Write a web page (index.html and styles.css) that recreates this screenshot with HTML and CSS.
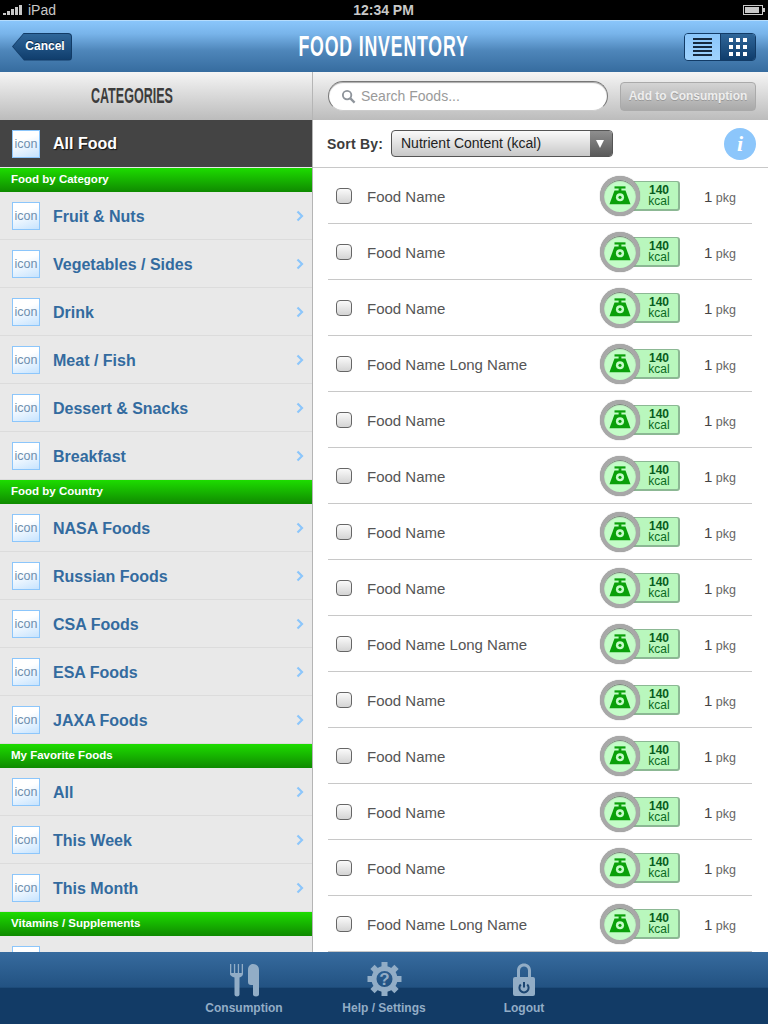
FILE: index.html
```html
<!DOCTYPE html>
<html lang="en">
<head>
    <meta charset="UTF-8">
    <meta name="viewport" content="width=device-width, initial-scale=1.0">
    <title>Food Inventory</title>
    <link rel="stylesheet" href="styles.css">
</head>
<body>
    <svg class="sprites" width="0" height="0">
        <symbol id="scale" viewBox="0 0 24 20">
            <rect x="6" y="0" width="12" height="2.400"/>
            <rect x="10.500" y="2" width="3" height="4"/>
            <path d="M6 4.500h12L23.500 19.500H.5z"/>
            <circle cx="12" cy="12" r="4.400" fill="#c4fcc8"/>
            <circle cx="12" cy="12" r="1.700"/>
        </symbol>
        <symbol id="chevron" viewBox="0 0 8 12">
            <path d="M1.500 1.500 6 6l-4.500 4.500" fill="none" stroke="#8cc6fb" stroke-width="2.200"/>
        </symbol>
    </svg>

    <div class="status-bar">
        <div class="status-left">
            <span class="signal"><i></i><i></i><i></i><i></i><i></i></span>
            <span>iPad</span>
        </div>
        <div class="status-time">12:34 PM</div>
        <div class="status-right"><span class="battery"><i></i></span></div>
    </div>

    <header class="nav-bar">
        <div class="nav-left"><button class="back-btn"><span>Cancel</span></button></div>
        <h1 class="nav-title">Food Inventory</h1>
        <div class="nav-right">
            <div class="view-toggle">
                <span class="view-list"><i></i><i></i><i></i><i></i><i></i></span>
                <span class="view-grid"><i></i><i></i><i></i><i></i><i></i><i></i><i></i><i></i><i></i></span>
            </div>
        </div>
    </header>

    <main class="main">
        <aside class="sidebar">
            <div class="sidebar-head"><h2>Categories</h2></div>
            <div class="all-food"><span class="icon-box">icon</span><span class="all-name">All Food</span></div>

            <div class="group-head">Food by Category</div>
            <div class="cat-row"><span class="icon-box">icon</span><span class="cat-name">Fruit &amp; Nuts</span><svg class="chevron"><use href="#chevron"/></svg></div>
            <div class="cat-row"><span class="icon-box">icon</span><span class="cat-name">Vegetables / Sides</span><svg class="chevron"><use href="#chevron"/></svg></div>
            <div class="cat-row"><span class="icon-box">icon</span><span class="cat-name">Drink</span><svg class="chevron"><use href="#chevron"/></svg></div>
            <div class="cat-row"><span class="icon-box">icon</span><span class="cat-name">Meat / Fish</span><svg class="chevron"><use href="#chevron"/></svg></div>
            <div class="cat-row"><span class="icon-box">icon</span><span class="cat-name">Dessert &amp; Snacks</span><svg class="chevron"><use href="#chevron"/></svg></div>
            <div class="cat-row"><span class="icon-box">icon</span><span class="cat-name">Breakfast</span><svg class="chevron"><use href="#chevron"/></svg></div>

            <div class="group-head">Food by Country</div>
            <div class="cat-row"><span class="icon-box">icon</span><span class="cat-name">NASA Foods</span><svg class="chevron"><use href="#chevron"/></svg></div>
            <div class="cat-row"><span class="icon-box">icon</span><span class="cat-name">Russian Foods</span><svg class="chevron"><use href="#chevron"/></svg></div>
            <div class="cat-row"><span class="icon-box">icon</span><span class="cat-name">CSA Foods</span><svg class="chevron"><use href="#chevron"/></svg></div>
            <div class="cat-row"><span class="icon-box">icon</span><span class="cat-name">ESA Foods</span><svg class="chevron"><use href="#chevron"/></svg></div>
            <div class="cat-row"><span class="icon-box">icon</span><span class="cat-name">JAXA Foods</span><svg class="chevron"><use href="#chevron"/></svg></div>

            <div class="group-head">My Favorite Foods</div>
            <div class="cat-row"><span class="icon-box">icon</span><span class="cat-name">All</span><svg class="chevron"><use href="#chevron"/></svg></div>
            <div class="cat-row"><span class="icon-box">icon</span><span class="cat-name">This Week</span><svg class="chevron"><use href="#chevron"/></svg></div>
            <div class="cat-row"><span class="icon-box">icon</span><span class="cat-name">This Month</span><svg class="chevron"><use href="#chevron"/></svg></div>

            <div class="group-head">Vitamins / Supplements</div>
            <div class="cat-row cat-cut"><span class="icon-box"></span></div>
        </aside>

        <section class="content">
            <div class="search-bar">
                <div class="search-field">
                    <svg class="search-icon" viewBox="0 0 16 16"><circle cx="6.500" cy="6.500" r="4.500" fill="none" stroke="#8e949b" stroke-width="2"/><path d="M10 10l4.500 4.500" stroke="#8e949b" stroke-width="2.400"/></svg>
                    <span>Search Foods...</span>
                </div>
                <button class="add-btn">Add to Consumption</button>
            </div>
            <div class="sort-bar">
                <span class="sort-label">Sort By:</span>
                <div class="sort-select"><span class="sort-value">Nutrient Content (kcal)</span><span class="sort-arrow"></span></div>
                <span class="info-btn">i</span>
            </div>
            <ul class="food-list">
                <li class="food-row"><span class="check"></span><span class="food-name">Food Name</span><span class="badge"><span class="badge-icon"><svg><use href="#scale"/></svg></span><span class="badge-text"><b>140</b><span>kcal</span></span></span><span class="qty"><b>1</b> pkg</span></li>
                <li class="food-row"><span class="check"></span><span class="food-name">Food Name</span><span class="badge"><span class="badge-icon"><svg><use href="#scale"/></svg></span><span class="badge-text"><b>140</b><span>kcal</span></span></span><span class="qty"><b>1</b> pkg</span></li>
                <li class="food-row"><span class="check"></span><span class="food-name">Food Name</span><span class="badge"><span class="badge-icon"><svg><use href="#scale"/></svg></span><span class="badge-text"><b>140</b><span>kcal</span></span></span><span class="qty"><b>1</b> pkg</span></li>
                <li class="food-row"><span class="check"></span><span class="food-name">Food Name Long Name</span><span class="badge"><span class="badge-icon"><svg><use href="#scale"/></svg></span><span class="badge-text"><b>140</b><span>kcal</span></span></span><span class="qty"><b>1</b> pkg</span></li>
                <li class="food-row"><span class="check"></span><span class="food-name">Food Name</span><span class="badge"><span class="badge-icon"><svg><use href="#scale"/></svg></span><span class="badge-text"><b>140</b><span>kcal</span></span></span><span class="qty"><b>1</b> pkg</span></li>
                <li class="food-row"><span class="check"></span><span class="food-name">Food Name</span><span class="badge"><span class="badge-icon"><svg><use href="#scale"/></svg></span><span class="badge-text"><b>140</b><span>kcal</span></span></span><span class="qty"><b>1</b> pkg</span></li>
                <li class="food-row"><span class="check"></span><span class="food-name">Food Name</span><span class="badge"><span class="badge-icon"><svg><use href="#scale"/></svg></span><span class="badge-text"><b>140</b><span>kcal</span></span></span><span class="qty"><b>1</b> pkg</span></li>
                <li class="food-row"><span class="check"></span><span class="food-name">Food Name</span><span class="badge"><span class="badge-icon"><svg><use href="#scale"/></svg></span><span class="badge-text"><b>140</b><span>kcal</span></span></span><span class="qty"><b>1</b> pkg</span></li>
                <li class="food-row"><span class="check"></span><span class="food-name">Food Name Long Name</span><span class="badge"><span class="badge-icon"><svg><use href="#scale"/></svg></span><span class="badge-text"><b>140</b><span>kcal</span></span></span><span class="qty"><b>1</b> pkg</span></li>
                <li class="food-row"><span class="check"></span><span class="food-name">Food Name</span><span class="badge"><span class="badge-icon"><svg><use href="#scale"/></svg></span><span class="badge-text"><b>140</b><span>kcal</span></span></span><span class="qty"><b>1</b> pkg</span></li>
                <li class="food-row"><span class="check"></span><span class="food-name">Food Name</span><span class="badge"><span class="badge-icon"><svg><use href="#scale"/></svg></span><span class="badge-text"><b>140</b><span>kcal</span></span></span><span class="qty"><b>1</b> pkg</span></li>
                <li class="food-row"><span class="check"></span><span class="food-name">Food Name</span><span class="badge"><span class="badge-icon"><svg><use href="#scale"/></svg></span><span class="badge-text"><b>140</b><span>kcal</span></span></span><span class="qty"><b>1</b> pkg</span></li>
                <li class="food-row"><span class="check"></span><span class="food-name">Food Name</span><span class="badge"><span class="badge-icon"><svg><use href="#scale"/></svg></span><span class="badge-text"><b>140</b><span>kcal</span></span></span><span class="qty"><b>1</b> pkg</span></li>
                <li class="food-row"><span class="check"></span><span class="food-name">Food Name Long Name</span><span class="badge"><span class="badge-icon"><svg><use href="#scale"/></svg></span><span class="badge-text"><b>140</b><span>kcal</span></span></span><span class="qty"><b>1</b> pkg</span></li>
            </ul>
        </section>
    </main>

    <nav class="tab-bar">
        <div class="tab">
            <svg class="tab-icon" viewBox="0 0 34 34">
                <path d="M3 0h1.300v9h2.600V0h1.300v9h2.600V0h1.300v9h2.600V0H16v10c0 2-2 3-3.500 3.500v17c0 2.500-5 2.500-5 0v-17C6 13 3 12 3 10z"/>
                <path d="M26 0c4 0 6 2.500 6 6v24.500c0 2.500-6 2.500-6 0V21h-2c-2 0-3-1-3-3V6c0-3.500 2-6 5-6z"/>
            </svg>
            <span>Consumption</span>
        </div>
        <div class="tab">
            <svg class="tab-icon" viewBox="0 0 34 34">
                <g transform="translate(17.500 15)">
                    <circle r="10.500" class="gear-ring"/>
                    <rect x="-3" y="-17" width="6" height="6"/>
                    <rect x="-3" y="-17" width="6" height="6" transform="rotate(45)"/>
                    <rect x="-3" y="-17" width="6" height="6" transform="rotate(90)"/>
                    <rect x="-3" y="-17" width="6" height="6" transform="rotate(135)"/>
                    <rect x="-3" y="-17" width="6" height="6" transform="rotate(180)"/>
                    <rect x="-3" y="-17" width="6" height="6" transform="rotate(225)"/>
                    <rect x="-3" y="-17" width="6" height="6" transform="rotate(270)"/>
                    <rect x="-3" y="-17" width="6" height="6" transform="rotate(315)"/>
                    <text y="6" text-anchor="middle" class="gear-mark">?</text>
                </g>
            </svg>
            <span>Help / Settings</span>
        </div>
        <div class="tab">
            <svg class="tab-icon" viewBox="0 0 34 34">
                <path d="M10 14V6.500C10 -3 24 -3 24 6.500V14h-3V6.500C21 1 13 1 13 6.500V14z"/>
                <rect x="6" y="13" width="22" height="19" rx="2"/>
                <path class="lock-power" d="M13.800 20.500a4.600 4.600 0 1 0 6.400 0M17 18v5.500"/>
            </svg>
            <span>Logout</span>
        </div>
    </nav>
</body>
</html>
```

FILE: styles.css
```css
* {
    margin: 0;
    padding: 0;
    box-sizing: border-box;
}

body {
    width: 768px;
    height: 1024px;
    overflow: hidden;
    display: flex;
    flex-direction: column;
    font-family: 'Liberation Sans', Arial, sans-serif;
    background: #fff;
}

.sprites {
    position: absolute;
}

/* status bar */
.status-bar {
    height: 20px;
    flex: none;
    display: grid;
    grid-template-columns: 1fr auto 1fr;
    align-items: center;
    padding: 0 4px 0 3px;
    background: #000;
    color: #c8c8c8;
    font-size: 14px;
}

.status-left {
    display: flex;
    align-items: center;
    gap: 6px;
}

.signal {
    display: flex;
    align-items: flex-end;
    gap: 1px;
    height: 10px;
}

.signal i {
    width: 3px;
    background: #c8c8c8;
}

.signal i:nth-child(1) { height: 2px; }
.signal i:nth-child(2) { height: 4px; }
.signal i:nth-child(3) { height: 6px; }
.signal i:nth-child(4) { height: 8px; }
.signal i:nth-child(5) { height: 10px; }

.status-time {
    font-weight: bold;
    font-size: 14px;
}

.status-right {
    display: flex;
    justify-content: flex-end;
}

.battery {
    position: relative;
    width: 20px;
    height: 10px;
    margin-right: 1px;
    padding: 1px;
    border: 1px solid #c8c8c8;
    display: block;
}

.battery::after {
    content: '';
    position: absolute;
    right: -3px;
    top: 2px;
    width: 2px;
    height: 4px;
    background: #c8c8c8;
}

.battery i {
    display: block;
    width: 14px;
    height: 6px;
    background: #c8c8c8;
}

/* nav bar */
.nav-bar {
    height: 52px;
    flex: none;
    display: grid;
    grid-template-columns: 1fr auto 1fr;
    align-items: center;
    padding: 0 12px;
    background: linear-gradient(#8ac6fb, #78b4ea 25%, #4e86ba 58%, #366c9f);
    border-top: 1px solid #b5dcfc;
}

/* no condensed family on the box, so the heading faces are squeezed */
.nav-title {
    font-size: 29px;
    font-weight: bold;
    letter-spacing: 1.400px;
    line-height: 1;
    color: #fff;
    text-transform: uppercase;
    transform: scaleX(.61);
}

.back-btn {
    position: relative;
    display: block;
    width: 60px;
    height: 28px;
    border: none;
    background: #123b66;
    clip-path: polygon(12px 0, 100% 0, 100% 100%, 12px 100%, 0 50%);
    border-radius: 0 4px 4px 0;
    color: #fff;
    font: bold 12px 'Liberation Sans', sans-serif;
}

.back-btn::before {
    content: '';
    position: absolute;
    inset: 1px;
    background: linear-gradient(#2f6699, #0f3d6c);
    clip-path: polygon(11px 0, 100% 0, 100% 100%, 11px 100%, 0 50%);
    border-radius: 0 3px 3px 0;
}

.back-btn span {
    position: relative;
    left: 3px;
    top: -1px;
    text-shadow: 0 -1px 0 #0a2a4c;
}

.nav-right {
    display: flex;
    justify-content: flex-end;
}

.view-toggle {
    display: flex;
    width: 72px;
    height: 28px;
    border: 1px solid #123b66;
    border-radius: 4px;
    overflow: hidden;
}

.view-list {
    width: 36px;
    display: flex;
    flex-direction: column;
    justify-content: center;
    align-items: center;
    gap: 2px;
    background: linear-gradient(#8ac6fb, #9fd2fd);
    border-right: 1px solid #123b66;
}

.view-list i {
    width: 19px;
    height: 2px;
    background: #16293e;
}

.view-grid {
    flex: 1;
    display: grid;
    grid-template-columns: repeat(3, 4px);
    grid-auto-rows: 4px;
    gap: 3px;
    justify-content: center;
    align-content: center;
    background: linear-gradient(#2f6699, #0f3d6c);
}

.view-grid i {
    background: #fff;
}

/* main area */
.main {
    flex: 1;
    min-height: 0;
    display: flex;
    overflow: hidden;
}

.sidebar {
    width: 313px;
    flex: none;
    overflow: hidden;
    background: #e9e9e9;
    border-right: 1px solid #b5b5b5;
}

.sidebar-head {
    height: 48px;
    display: flex;
    align-items: center;
    justify-content: center;
    padding-right: 48px;
    background: linear-gradient(#f5f5f5, #bcbcbc);
}

.sidebar-head h2 {
    font-size: 22px;
    font-weight: bold;
    color: #3c3c3c;
    text-transform: uppercase;
    transform: scaleX(.57);
}

.icon-box {
    width: 28px;
    height: 28px;
    flex: none;
    display: flex;
    align-items: center;
    justify-content: center;
    background: linear-gradient(160deg, #fff 35%, #c6e3fe);
    border: 1px solid #8cc6fb;
    font-size: 12.500px;
    color: #6f8fae;
}

.all-food {
    height: 48px;
    display: flex;
    align-items: center;
    gap: 13px;
    padding-left: 12px;
    background: #444;
    border-bottom: 1px solid #e9e9e9;
}

.all-name {
    padding-top: 1px;
    color: #fff;
    font-size: 16px;
    font-weight: bold;
    text-shadow: 1px 1px 1px #111;
}

.group-head {
    height: 24px;
    display: flex;
    align-items: center;
    padding: 0 0 2px 11px;
    background: linear-gradient(#1ddc00, #0f8a00);
    color: #fff;
    font-size: 11.500px;
    font-weight: bold;
}

.cat-row {
    height: 48px;
    display: flex;
    align-items: center;
    gap: 13px;
    padding: 0 8px 0 12px;
    border-bottom: 1px solid #dcdcdc;
}

.cat-cut {
    border-bottom: none;
}

.cat-name {
    flex: 1;
    padding-top: 2px;
    font-size: 16px;
    font-weight: bold;
    color: #336b9f;
}

.chevron {
    width: 8px;
    height: 12px;
    flex: none;
}

/* right column */
.content {
    flex: 1;
    min-width: 0;
    display: flex;
    flex-direction: column;
}

.search-bar {
    height: 48px;
    flex: none;
    display: flex;
    align-items: center;
    gap: 12px;
    padding: 0 12px 0 15px;
    background: linear-gradient(#f5f5f5, #bcbcbc);
}

.search-field {
    width: 280px;
    height: 30px;
    display: flex;
    align-items: center;
    gap: 5px;
    padding-left: 12px;
    background: #fff;
    border: 1px solid #777;
    border-bottom-color: #ccc;
    border-radius: 15px;
    box-shadow: inset 0 1px 1px #aaa;
    font-size: 14px;
    color: #9a9a9a;
}

.search-icon {
    width: 15px;
    height: 15px;
}

.add-btn {
    width: 136px;
    height: 29px;
    border: 1px solid #aaa;
    border-radius: 4px;
    background: linear-gradient(#d4d4d4, #a9a9a9);
    color: #eee;
    font: bold 12px 'Liberation Sans', sans-serif;
    text-shadow: 0 1px 0 #999;
}

.sort-bar {
    height: 48px;
    flex: none;
    display: flex;
    align-items: center;
    padding: 0 12px 0 14px;
    border-bottom: 1px solid #c8c8c8;
}

.sort-label {
    width: 64px;
    font-size: 14px;
    font-weight: bold;
    letter-spacing: .2px;
    color: #3c3c3c;
}

.sort-select {
    width: 222px;
    height: 27px;
    display: flex;
    border: 1px solid #555;
    border-radius: 4px;
    overflow: hidden;
    background: linear-gradient(#fafafa, #c8c8c8);
}

.sort-value {
    flex: 1;
    padding-left: 9px;
    font-size: 14px;
    line-height: 25px;
    color: #222;
}

.sort-arrow {
    position: relative;
    width: 22px;
    background: linear-gradient(#8f8f8f, #5a5a5a);
}

.sort-arrow::after {
    content: '';
    position: absolute;
    left: 6px;
    top: 9px;
    border-left: 4.500px solid transparent;
    border-right: 4.500px solid transparent;
    border-top: 8px solid #fff;
}

.info-btn {
    width: 32px;
    height: 32px;
    margin-left: auto;
    border-radius: 50%;
    background: #8cc6fb;
    color: #fff;
    font: italic bold 22px/32px 'Liberation Serif', serif;
    text-align: center;
}

.food-list {
    list-style: none;
    overflow: hidden;
}

.food-row {
    height: 56px;
    margin: 0 16px 0 15px;
    display: flex;
    align-items: center;
    border-bottom: 1px solid #c8c8c8;
}

.check {
    width: 16px;
    height: 16px;
    margin-left: 8px;
    flex: none;
    border: 1px solid #666;
    border-radius: 4px;
    background: linear-gradient(#fafafa, #d4d4d4);
}

.food-name {
    flex: 1;
    margin: 2px 0 0 15px;
    font-size: 15px;
    color: #555;
}

.badge {
    position: relative;
    width: 80px;
    height: 40px;
    display: flex;
    align-items: center;
    flex: none;
}

.badge-icon {
    position: absolute;
    left: 0;
    top: 0;
    width: 40px;
    height: 40px;
    display: flex;
    align-items: center;
    justify-content: center;
    border: 4px solid #a8a8a8;
    border-radius: 50%;
    background: #c4fcc8;
    box-shadow: inset 0 1px 1px #777, 0 0 1px #777;
    fill: #0aa00a;
}

.badge-icon svg {
    width: 22px;
    height: 19px;
}

.badge-text {
    width: 60px;
    height: 30px;
    margin-left: 20px;
    padding: 1px 0 0 19px;
    display: flex;
    flex-direction: column;
    align-items: center;
    justify-content: center;
    border: 1px solid #8cb894;
    border-right-width: 2px;
    border-bottom-width: 2px;
    border-radius: 3px;
    background: #b9f7bd;
    color: #0a6a1e;
    font-size: 12px;
    line-height: 11px;
}

.badge-text b {
    font-size: 12px;
    color: #065c20;
}

.qty {
    width: 72px;
    margin-top: 2px;
    padding-left: 24px;
    flex: none;
    font-size: 12.500px;
    color: #666;
}

.qty b {
    font-size: 15px;
    font-weight: normal;
    color: #444;
}

/* tab bar */
.tab-bar {
    height: 72px;
    flex: none;
    display: flex;
    justify-content: center;
    background: linear-gradient(#376b9e, #225282 49%, #123b66 50%, #123b66);
}

.tab {
    width: 140px;
    display: flex;
    flex-direction: column;
    align-items: center;
    padding-top: 12px;
    gap: 3px;
    color: #92adc6;
    font-size: 12px;
    font-weight: bold;
}

.tab-icon {
    width: 34px;
    height: 34px;
    fill: #92adc6;
    overflow: visible;
}

.gear-ring {
    fill: none;
    stroke: #92adc6;
    stroke-width: 5;
}

.gear-mark {
    font: bold 17px 'Liberation Sans', sans-serif;
    fill: #92adc6;
}

.lock-power {
    fill: none;
    stroke: #1c4672;
    stroke-width: 2;
}
```
